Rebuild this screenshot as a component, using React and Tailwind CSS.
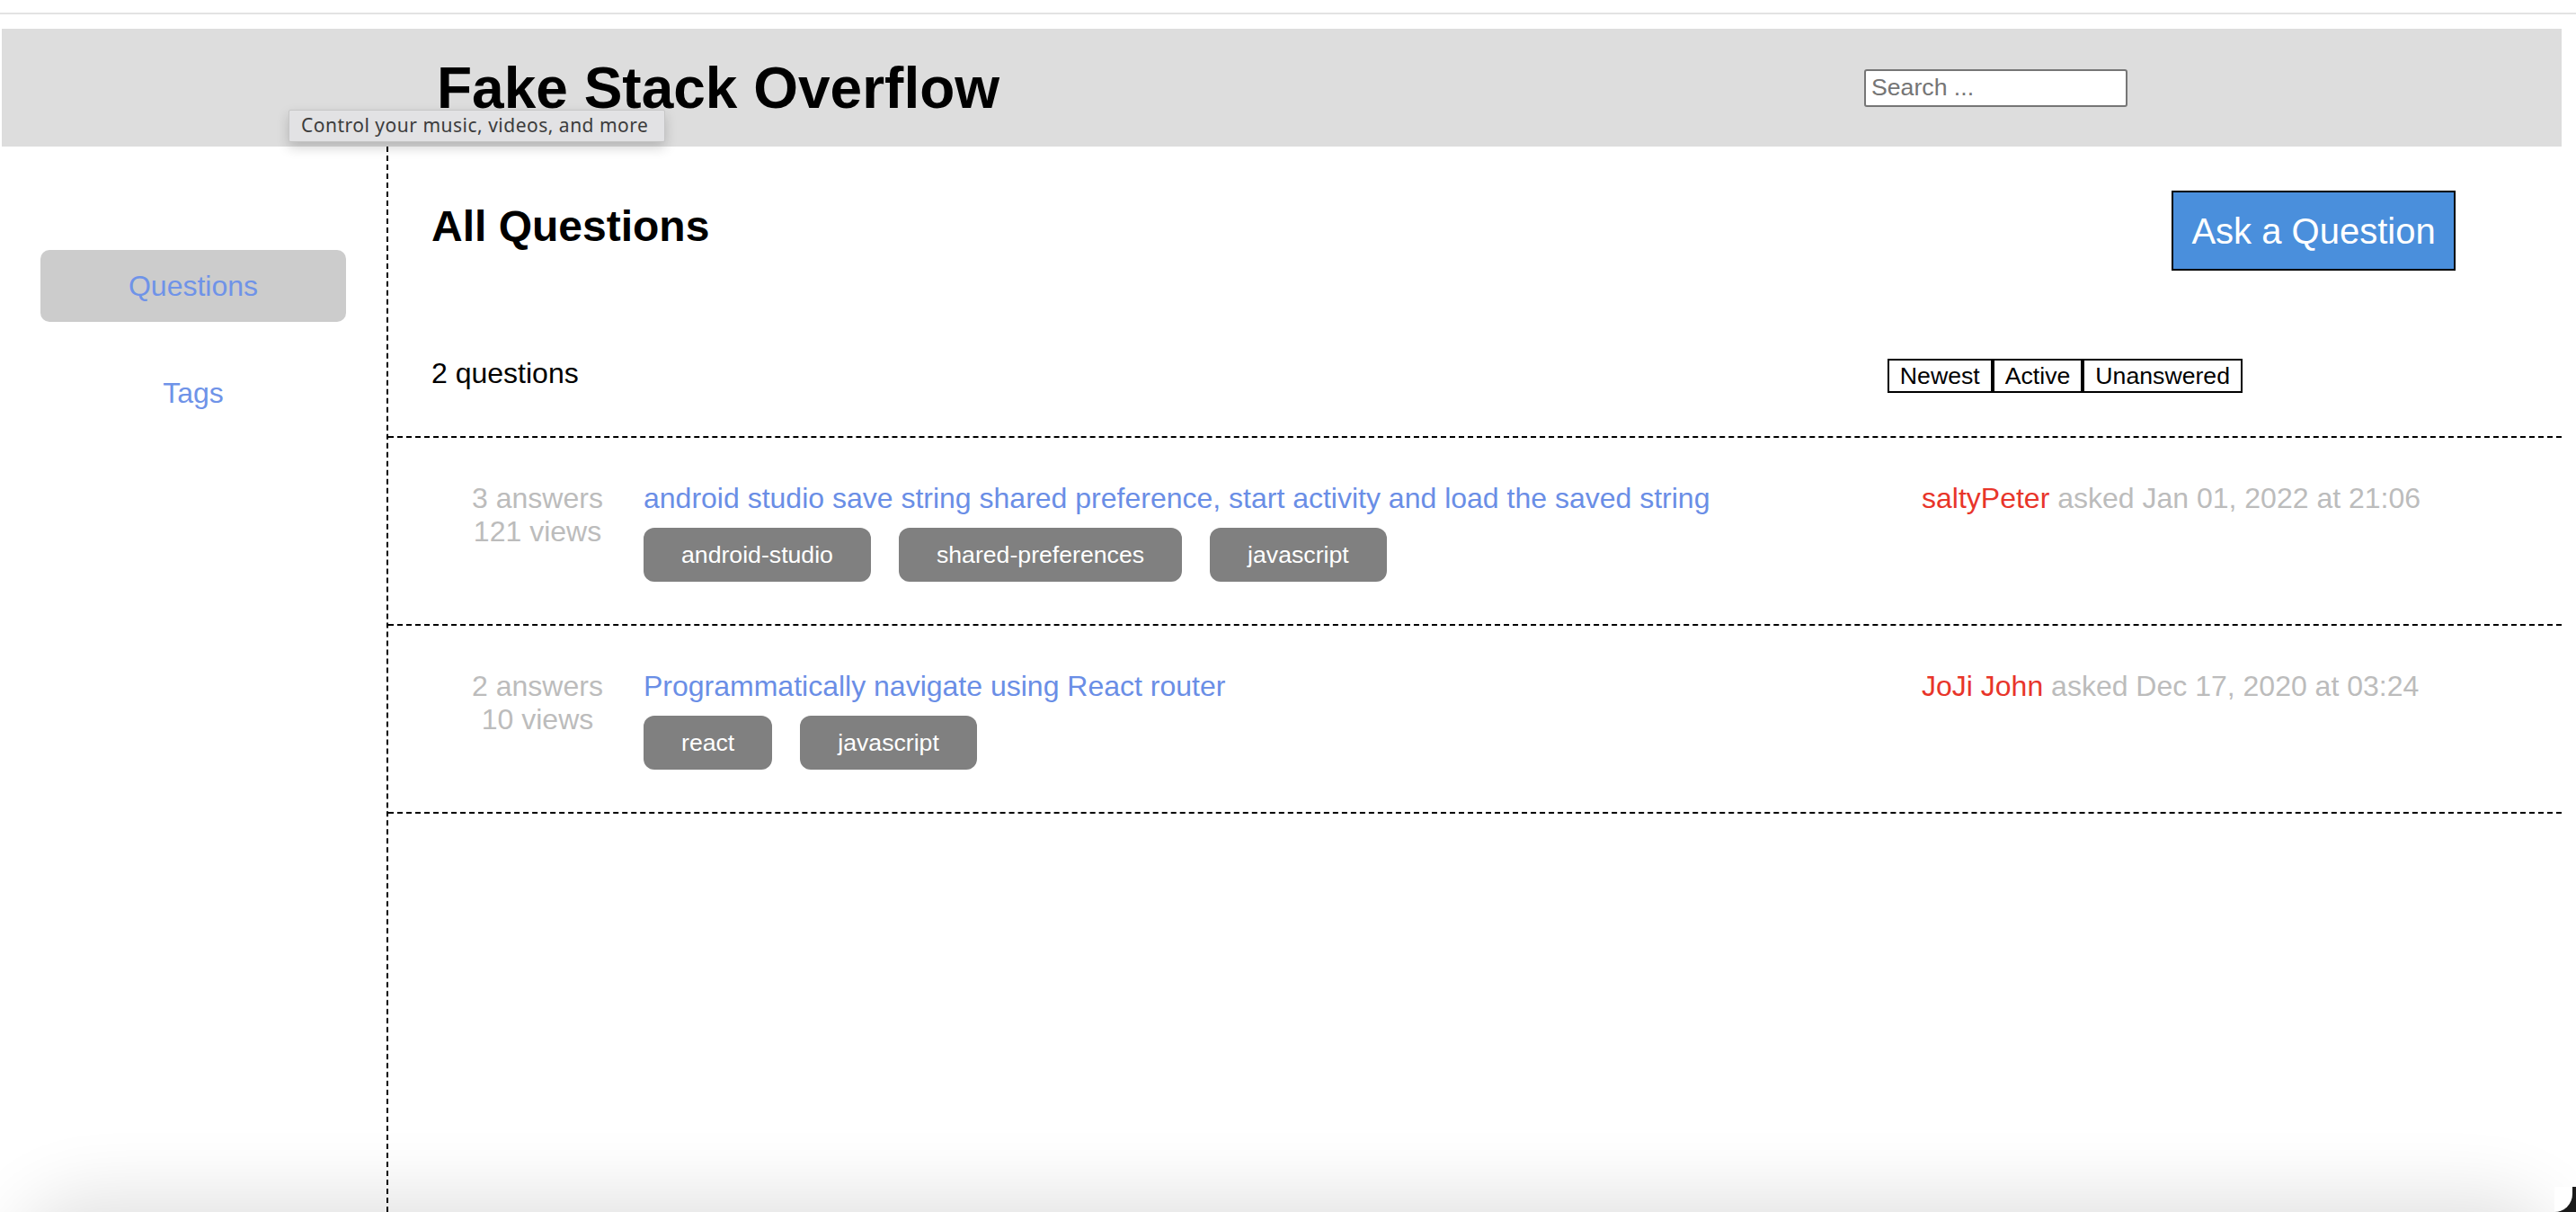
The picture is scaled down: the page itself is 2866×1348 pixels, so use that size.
const questions = [
  {
    answers: 3,
    views: 121,
    title: "android studio save string shared preference, start activity and load the saved string",
    tags: ["android-studio", "shared-preferences", "javascript"],
    user: "saltyPeter",
    date: "Jan 01, 2022 at 21:06",
  },
  {
    answers: 2,
    views: 10,
    title: "Programmatically navigate using React router",
    tags: ["react", "javascript"],
    user: "JoJi John",
    date: "Dec 17, 2020 at 03:24",
  },
];

function QuestionRow({ q }) {
  return (
    <div className="flex border-b-2 border-dashed border-black pt-[49px] h-[209px]">
      <div className="w-[284px] pl-[48px] text-center text-[32px] leading-[37px] text-[#bcbcbc]">
        <div>{q.answers} answers</div>
        <div>{q.views} views</div>
      </div>
      <div className="w-[1422px]">
        <div className="text-[32px] leading-[37px] text-[#6a8ee6]">{q.title}</div>
        <div className="flex gap-[31px] mt-[14px]">
          {q.tags.map((t) => (
            <span
              key={t}
              className="h-[60px] px-[42px] flex items-center rounded-[12px] bg-[#808080] text-white text-[26.67px]"
            >
              {t}
            </span>
          ))}
        </div>
      </div>
      <div className="text-[32px] leading-[37px]">
        <span className="text-[#e8352a]">{q.user}</span>
        <span className="text-[#bcbcbc]"> asked {q.date}</span>
      </div>
    </div>
  );
}

export default function App() {
  return (
    <div className="relative h-[1348px] overflow-hidden bg-white font-['Liberation_Sans',Arial,sans-serif] text-black flex flex-col">
      {/* browser chrome line */}
      <div className="h-[14px]" />
      <div className="h-[2px] bg-[#e3e3e3]" />

      <div className="flex-1 flex flex-col pl-[2px] pr-[16px] pt-[16px]">
        {/* Header */}
        <header className="h-[131px] shrink-0 bg-[#dddddd] flex items-center justify-between pl-[484px] pr-[483px]">
          <h1 className="text-[64px] font-bold leading-none">Fake Stack Overflow</h1>
          <input
            placeholder="Search ..."
            className="w-[293px] h-[42px] bg-white border-2 border-[#767676] rounded-[3px] pl-[6px] text-[26.67px] placeholder:text-[#757575] outline-none"
          />
        </header>

        <div className="flex-1 flex">
          {/* Sidebar */}
          <nav className="w-[430px] shrink-0 border-r-2 border-dashed border-black pt-[115px] pl-[43px]">
            <div className="w-[340px] h-[80px] rounded-[10px] bg-[#cccccc] flex items-center justify-center text-[32px] text-[#6f93e8]">
              Questions
            </div>
            <div className="w-[340px] h-[80px] mt-[39px] flex items-center justify-center text-[32px] text-[#6f93e8]">
              Tags
            </div>
          </nav>

          {/* Main */}
          <main className="flex-1">
            <div className="flex items-start justify-between pl-[48px] pr-[118px] pt-[49px]">
              <h2 className="text-[48px] font-bold mt-[12px] leading-[55px]">All Questions</h2>
              <button className="w-[316px] h-[89px] bg-[#4a8fdc] border-2 border-black text-white text-[40px]">
                Ask a Question
              </button>
            </div>

            <div className="flex items-start justify-between pl-[48px] pr-[355px] mt-[96px] h-[90px] border-b-2 border-dashed border-black">
              <div className="text-[32px] leading-[36px]">2 questions</div>
              <div className="flex mt-[2px]">
                {["Newest", "Active", "Unanswered"].map((s) => (
                  <button
                    key={s}
                    className="border-2 border-black bg-white px-[12px] py-[2px] text-[26.67px] leading-[30px]"
                  >
                    {s}
                  </button>
                ))}
              </div>
            </div>

            {questions.map((q, i) => (
              <QuestionRow key={i} q={q} />
            ))}
          </main>
        </div>
      </div>

      {/* tooltip over header */}
      <div className="absolute left-[321px] top-[122px] h-[36px] w-[419px] flex items-center pl-[13px] bg-[#e2e2e4] border border-[#c6c6c6] rounded-[2px] shadow-[0_6px_14px_rgba(0,0,0,0.18)] text-[21px] tracking-[0.5px] text-[#3c3c3c] font-['Noto_Sans',sans-serif]">
        Control your music, videos, and more
      </div>

      {/* window shadow at bottom */}
      <div className="pointer-events-none absolute left-[60px] right-[60px] top-[1375px] h-[100px] rounded-[40px] shadow-[0_0_80px_45px_rgba(0,0,0,0.12)]" />
      <div className="absolute right-0 bottom-0 w-[24px] h-[28px] bg-[#1a1a1a]">
        <div className="w-[20px] h-full bg-white rounded-br-[24px]" />
      </div>
    </div>
  );
}
